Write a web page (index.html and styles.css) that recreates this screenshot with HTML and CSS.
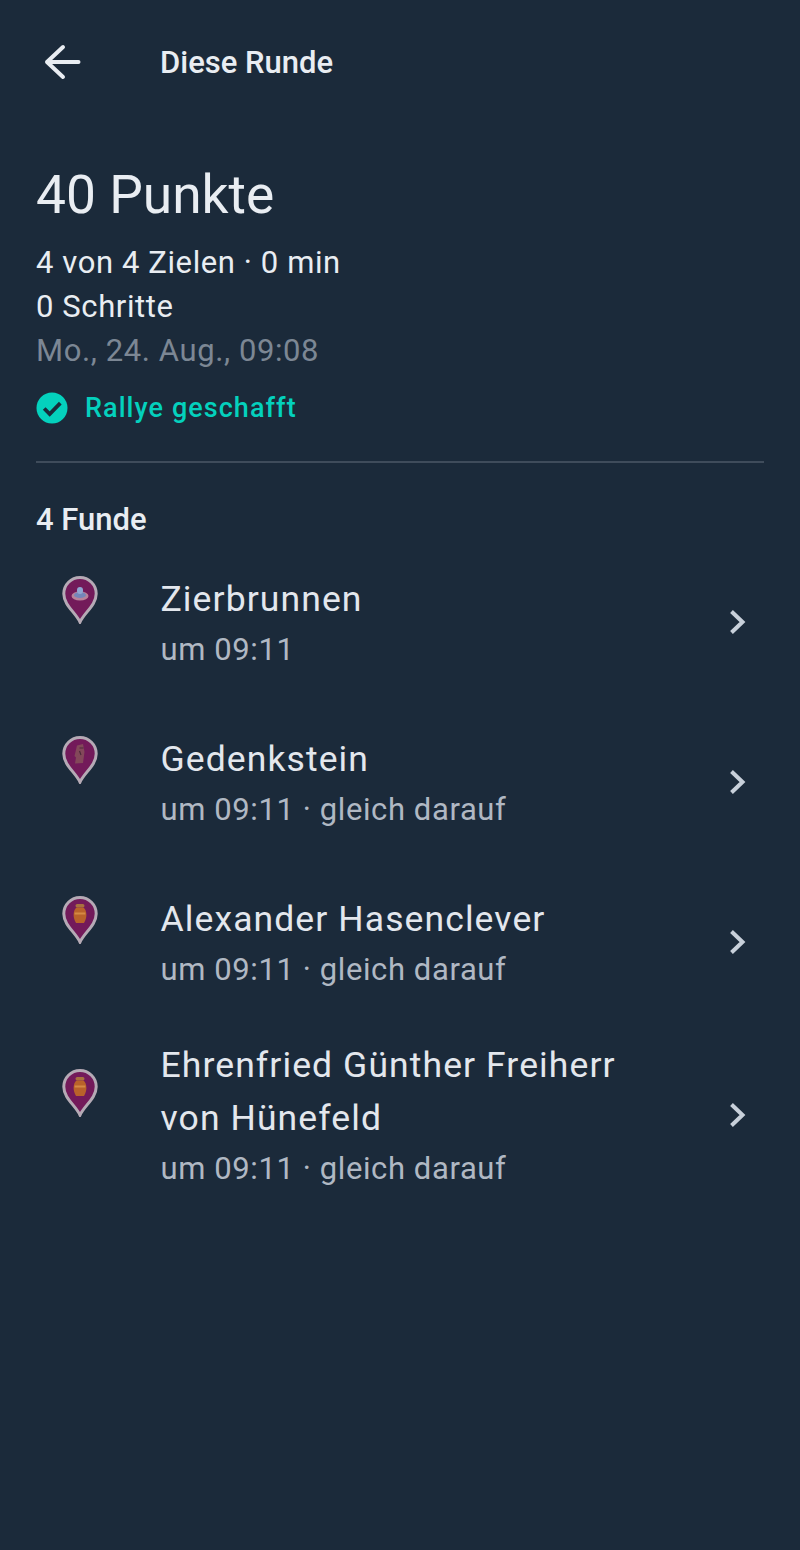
FILE: index.html
```html
<!DOCTYPE html>
<html lang="de">

<head>
    <meta charset="UTF-8">
    <meta name="viewport" content="width=device-width, initial-scale=1.0">
    <title>Diese Runde</title>
    <link rel="stylesheet" href="styles.css">
</head>

<body>

    <!-- Top bar -->
    <header class="topbar">
        <svg class="back-icon" viewBox="0 0 40 36" width="40" height="36">
            <path d="M35.5 18H4M20 3L4 18l16 15" fill="none" stroke="#e9edf2" stroke-width="4" stroke-linecap="round" stroke-linejoin="round"/>
        </svg>
        <h1 class="topbar-title">Diese Runde</h1>
    </header>

    <!-- Summary of the round -->
    <section class="summary">
        <h2 class="points">40 Punkte</h2>
        <p class="stat">4 von 4 Zielen · 0 min</p>
        <p class="stat">0 Schritte</p>
        <p class="stat stat-date">Mo., 24. Aug., 09:08</p>
        <div class="status">
            <svg viewBox="0 0 32 32" width="32" height="32">
                <circle cx="16" cy="16" r="15.5" fill="#04d1bd"/>
                <path d="M8.2 16.5l5.500 5.500L24.300 11.200" fill="none" stroke="#1b2a3a" stroke-width="3.800"/>
            </svg>
            <span>Rallye geschafft</span>
        </div>
    </section>

    <hr class="divider">

    <h3 class="finds-title">4 Funde</h3>

    <ul class="finds">
        <li class="find">
            <div class="pin-box">
                <svg viewBox="0 0 36 48" width="36" height="48">
                    <path class="pin" d="M18 46C13.500 36.500 1.800 29 1.800 17.700a16.200 16.200 0 0 1 32.400 0C34.200 29 22.500 36.500 18 46z"/>
                    <ellipse cx="18" cy="20" rx="8.500" ry="4.500" fill="#b8829a"/>
                    <ellipse cx="18" cy="19" rx="6" ry="3" fill="#7486ba"/>
                    <rect x="15" y="11" width="6" height="7" rx="3" fill="#8fa6d2"/>
                </svg>
            </div>
            <div class="find-text">
                <div class="find-name">Zierbrunnen</div>
                <div class="find-time">um 09:11</div>
            </div>
            <svg class="chevron" viewBox="0 0 20 28" width="20" height="28">
                <path d="M3.500 3.500L14.500 14 3.500 24.500" fill="none" stroke="#c8d0da" stroke-width="4"/>
            </svg>
        </li>
        <li class="find">
            <div class="pin-box">
                <svg viewBox="0 0 36 48" width="36" height="48">
                    <path class="pin" d="M18 46C13.500 36.500 1.800 29 1.800 17.700a16.200 16.200 0 0 1 32.400 0C34.200 29 22.500 36.500 18 46z"/>
                    <path d="M15 9.500l6-1.500 1.500 8-1.500 11-8 .5 1-6-1.500-1.500z" fill="#83485a"/>
                    <path d="M17.500 12h4M17.500 15l1.500 4" stroke="#4c2a3a" stroke-width="1.200" fill="none"/>
                </svg>
            </div>
            <div class="find-text">
                <div class="find-name">Gedenkstein</div>
                <div class="find-time">um 09:11 · gleich darauf</div>
            </div>
            <svg class="chevron" viewBox="0 0 20 28" width="20" height="28">
                <path d="M3.500 3.500L14.500 14 3.500 24.500" fill="none" stroke="#c8d0da" stroke-width="4"/>
            </svg>
        </li>
        <li class="find">
            <div class="pin-box">
                <svg viewBox="0 0 36 48" width="36" height="48">
                    <path class="pin" d="M18 46C13.500 36.500 1.800 29 1.800 17.700a16.200 16.200 0 0 1 32.400 0C34.200 29 22.500 36.500 18 46z"/>
                    <rect x="13.500" y="8" width="9" height="3.500" rx="1.700" fill="#a8703f"/>
                    <path d="M14.500 11.500h7c3.500 3 4 9.500.5 15.500h-8C10.500 21 11 14.500 14.500 11.500z" fill="#b9622a"/>
                    <path d="M12.600 17.500h10.800" stroke="#d58a44" stroke-width="2"/>
                </svg>
            </div>
            <div class="find-text">
                <div class="find-name">Alexander Hasenclever</div>
                <div class="find-time">um 09:11 · gleich darauf</div>
            </div>
            <svg class="chevron" viewBox="0 0 20 28" width="20" height="28">
                <path d="M3.500 3.500L14.500 14 3.500 24.500" fill="none" stroke="#c8d0da" stroke-width="4"/>
            </svg>
        </li>
        <li class="find">
            <div class="pin-box">
                <svg viewBox="0 0 36 48" width="36" height="48">
                    <path class="pin" d="M18 46C13.500 36.500 1.800 29 1.800 17.700a16.200 16.200 0 0 1 32.400 0C34.200 29 22.500 36.500 18 46z"/>
                    <rect x="13.500" y="8" width="9" height="3.500" rx="1.700" fill="#a8703f"/>
                    <path d="M14.500 11.500h7c3.500 3 4 9.500.5 15.500h-8C10.500 21 11 14.500 14.500 11.500z" fill="#b9622a"/>
                    <path d="M12.600 17.500h10.800" stroke="#d58a44" stroke-width="2"/>
                </svg>
            </div>
            <div class="find-text">
                <div class="find-name">Ehrenfried Günther Freiherr von Hünefeld</div>
                <div class="find-time">um 09:11 · gleich darauf</div>
            </div>
            <svg class="chevron" viewBox="0 0 20 28" width="20" height="28">
                <path d="M3.500 3.500L14.500 14 3.500 24.500" fill="none" stroke="#c8d0da" stroke-width="4"/>
            </svg>
        </li>
    </ul>

</body>

</html>
```

FILE: styles.css
```css
body {
    margin: 0;
    height: 1550px;
    overflow: hidden;
    background: #1b2a3a;
    font-family: Roboto, sans-serif;
    color: #e9edf2;
}

/* Top bar */
.topbar {
    display: flex;
    align-items: center;
    height: 124px;
}

.back-icon {
    margin-left: 43px;
}

.topbar-title {
    margin: 0 0 0 77px;
    font-size: 31px;
    font-weight: 500;
    color: #e9edf2;
}

/* Summary */
.summary {
    padding: 36px 36px 0;
}

.points {
    margin: 0 0 11px;
    font-size: 53.300px;
    line-height: 70px;
    font-weight: 400;
}

.stat {
    margin: 0;
    font-size: 31px;
    line-height: 44px;
    letter-spacing: 0.600px;
}

.stat-date {
    color: #7c8794;
}

.status {
    display: flex;
    align-items: center;
    gap: 17px;
    margin-top: 13px;
    height: 44px;
    font-size: 27px;
    font-weight: 500;
    letter-spacing: 1.050px;
    color: #04d1bd;
}

.divider {
    margin: 31px 36px 0;
    height: 2px;
    border: none;
    background: #3f4c5b;
}

.finds-title {
    margin: 35px 36px 0;
    font-size: 31px;
    line-height: 44px;
    font-weight: 500;
}

/* List of finds */
.finds {
    list-style: none;
    margin: 0;
    padding: 0;
}

.find {
    display: flex;
    align-items: center;
    box-sizing: border-box;
    min-height: 160px;
    padding: 15px 0;
}

.pin-box {
    display: flex;
    width: 160.500px;
    flex-shrink: 0;
    padding-bottom: 44px;
    padding-left: 62px;
    box-sizing: border-box;
}

.pin {
    fill: #731a5a;
    stroke: #b5aab5;
    stroke-width: 3;
}

.find-text {
    flex: 1;
    padding-top: 2px;
}

.find-name {
    font-size: 35.500px;
    line-height: 53px;
    letter-spacing: 1.100px;
    width: 490px;
    color: #e3e7ed;
}

.find-time {
    font-size: 31px;
    line-height: 47px;
    letter-spacing: 0.600px;
    color: #b0b8c3;
}

.chevron {
    margin-right: 52px;
    flex-shrink: 0;
}
```
